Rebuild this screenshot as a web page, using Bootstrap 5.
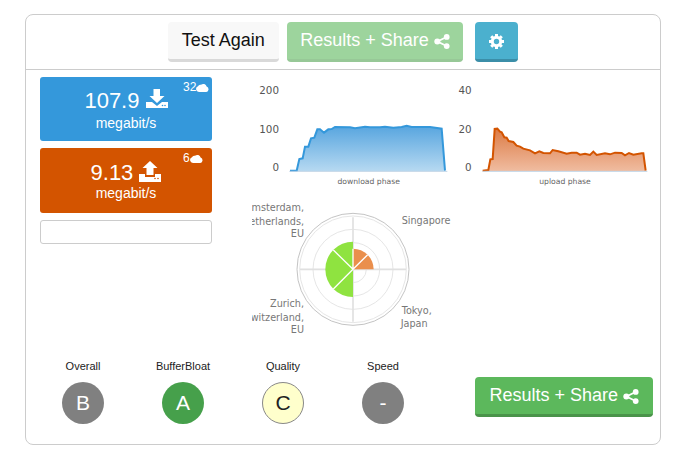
<!DOCTYPE html>
<html lang="en">
<head>
    <meta charset="UTF-8">
    <meta name="viewport" content="width=device-width, initial-scale=1.0">
    <title>Speed test results</title>
    <link href="https://cdn.jsdelivr.net/npm/bootstrap@5.3.3/dist/css/bootstrap.min.css" rel="stylesheet">
    <style>
        body {
            background: #fff;
            font-family: "Liberation Sans", Arial, sans-serif;
            color: #222;
        }
        .result-panel {
            width: 636px;
            height: 431px;
            margin: 14px 0 0 25px;
            border: 1px solid #ccc;
            border-radius: 8px;
        }
        .panel-top {
            height: 55px;
            padding-top: 7px;
            gap: 8px;
            border-bottom: 1px solid #ccc;
        }
        .btn-raised {
            height: 40px;
            padding: 0 13.5px;
            font-size: 18px;
            line-height: 35px;
            color: #fff;
            white-space: nowrap;
            border: 0;
            border-bottom: 3px solid;
            border-radius: 4px;
        }
        .btn-raised:hover { color: #fff; }
        .btn-again { padding: 0 14px; color: #111; background: #f8f8f8; border-color: #d9d9d9; }
        .btn-again:hover { color: #111; background: #f8f8f8; border-color: #d9d9d9; }
        .btn-share { background: #5cb85c; border-color: #4a934a; }
        .btn-share:hover { background: #5cb85c; border-color: #4a934a; }
        .btn-share-off { background: #9dd49d; border-color: #97c897; }
        .btn-share-off:hover { background: #9dd49d; border-color: #97c897; }
        .btn-cog { width: 43px; margin-left: 4px; padding: 0; background: #4bb0ce; border-color: #3b8ea8; }
        .btn-cog:hover { background: #4bb0ce; border-color: #3b8ea8; }
        .left-col { width: 172px; margin: 7px 38px 0 14px; }
        .speed-tile {
            height: 65px;
            margin-bottom: 7px;
            padding-top: 9px;
            color: #fff;
            text-align: center;
            border-radius: 3px;
        }
        .tile-down { height: 64px; background: #3498db; }
        .tile-up { padding-top: 10px; background: #d35400; }
        .tile-value { font-size: 22px; line-height: 29px; }
        .tile-unit { font-size: 14px; line-height: 14px; margin-top: 1px; }
        .tile-up .tile-unit { margin-top: -1px; }
        .ico-up { vertical-align: -2px; }
        .tile-servers {
            position: absolute;
            top: 3px;
            left: 143px;
            font-size: 12px;
            line-height: 14px;
        }
        .tile-blank { height: 24px; border: 1px solid #ccc; border-radius: 3px; }
        .charts-col { padding-top: 5px; }
        .chart-text { font-family: "DejaVu Sans", sans-serif; font-size: 23px; fill: #666; }
        .axis-text { font-family: "DejaVu Sans", sans-serif; font-size: 31px; fill: #555; }
        .polar-text { font-family: "DejaVu Sans", sans-serif; font-size: 29px; fill: #777; }
        .polar-box { margin-left: 2px; }
        .bottom-row { height: 87px; padding-left: 7px; padding-right: 7px; margin-top: 14px; }
        .grade-item { width: 100px; font-size: 11px; line-height: 14px; text-align: center; }
        .grade-dot {
            width: 42px;
            height: 42px;
            margin: 9px auto 0;
            color: #fff;
            font-size: 21px;
            line-height: 42px;
            border-radius: 50%;
        }
        .grade-gray { background: #808080; }
        .grade-green { background: #46a04b; }
        .grade-yellow { color: #222; background: #ffc; border: 1px solid #888; line-height: 40px; }
        .bottom-btn { margin-top: 18px; padding: 0 14px; }
    </style>
</head>
<body>
    <div class="result-panel">
        <div class="panel-top d-flex justify-content-center">
            <button type="button" class="btn btn-raised btn-again">Test Again</button>
            <button type="button" class="btn btn-raised btn-share-off">Results + Share
                <svg width="16" height="15" viewBox="0 0 16 15"><use href="#ico-share"/></svg>
            </button>
            <button type="button" class="btn btn-raised btn-cog">
                <svg width="17" height="17" viewBox="0 0 17 17" fill="none" stroke="#fff">
                    <circle cx="8.5" cy="8.5" r="4.2" stroke-width="3"/>
                    <path stroke-width="3" d="M8.5 1v3M8.5 13v3M1 8.5h3M13 8.5h3M3.2 3.2l2.1 2.1M11.7 11.7l2.1 2.1M3.2 13.8l2.1-2.1M11.7 5.3l2.1-2.1"/>
                </svg>
            </button>
        </div>

        <div class="d-flex">
            <div class="left-col">
                <div class="speed-tile tile-down position-relative">
                    <div class="tile-value">107.9
                        <svg width="22" height="19" viewBox="0 0 22 19" class="align-baseline"><use href="#ico-down"/></svg>
                    </div>
                    <div class="tile-unit">megabit/s</div>
                    <div class="tile-servers">32<svg width="13" height="9" viewBox="0 0 13 9"><use href="#ico-cloud"/></svg></div>
                </div>
                <div class="speed-tile tile-up position-relative">
                    <div class="tile-value">9.13
                        <svg width="22" height="21" viewBox="0 0 22 21" class="ico-up"><use href="#ico-up"/></svg>
                    </div>
                    <div class="tile-unit">megabit/s</div>
                    <div class="tile-servers">6<svg width="13" height="9" viewBox="0 0 13 9"><use href="#ico-cloud"/></svg></div>
                </div>
                <div class="tile-blank"></div>
            </div>

            <div class="charts-col">
                <div class="d-flex">
                    <svg width="200" height="120" viewBox="0 0 600 360">
                        <defs>
                            <linearGradient id="fillDown" x1="0" y1="0" x2="0" y2="1">
                                <stop offset="0" stop-color="#57a5df"/>
                                <stop offset="1" stop-color="#b6d9f1"/>
                            </linearGradient>
                        </defs>
                        <text class="axis-text" x="87" y="56" text-anchor="end">200</text>
                        <text class="axis-text" x="87" y="173" text-anchor="end">100</text>
                        <text class="axis-text" x="87" y="288" text-anchor="end">0</text>
                        <path fill="url(#fillDown)" d="M120 288L140 287 148 252 158 250 165 215 175 215 183 190 193 188 202 163 210 163 222 173 235 163 245 162 255 156 300 157 315 160 345 155 360 157 390 157 405 155 430 158 455 156 470 152 485 156 540 156 575 161 585 288Z"/>
                        <path fill="none" stroke="#3498db" stroke-width="6" d="M120 287H140L148 252 158 250 165 215 175 215 183 190 193 188 202 163 210 163 222 173 235 163 245 162 255 156 300 157 315 160 345 155 360 157 390 157 405 155 430 158 455 156 470 152 485 156 540 156 575 161 585 287"/>
                        <path stroke="#c0d4e6" stroke-width="3" d="M118 289H592"/>
                        <text class="chart-text" x="356" y="327" text-anchor="middle">download phase</text>
                    </svg>
                    <svg width="210" height="120" viewBox="0 0 630 360">
                        <defs>
                            <linearGradient id="fillUp" x1="0" y1="0" x2="0" y2="1">
                                <stop offset="0" stop-color="#dc7b45"/>
                                <stop offset="1" stop-color="#f0bca0"/>
                            </linearGradient>
                        </defs>
                        <text class="axis-text" x="65" y="56" text-anchor="end">40</text>
                        <text class="axis-text" x="65" y="173" text-anchor="end">20</text>
                        <text class="axis-text" x="65" y="288" text-anchor="end">0</text>
                        <path fill="url(#fillUp)" d="M98 288L115 285 121 253 128 252 134 162 142 161 150 170 155 172 163 187 170 188 176 198 190 201 200 212 210 215 220 221 240 226 255 235 268 229 280 234 300 235 308 225 325 229 350 236 365 233 380 233 390 239 405 236 420 240 430 230 440 240 465 235 480 238 495 233 515 234 525 241 537 234 550 239 575 235 580 235 587 288Z"/>
                        <path fill="none" stroke="#d35400" stroke-width="6" d="M98 287L115 285 121 253 128 252 134 162 142 161 150 170 155 172 163 187 170 188 176 198 190 201 200 212 210 215 220 221 240 226 255 235 268 229 280 234 300 235 308 225 325 229 350 236 365 233 380 233 390 239 405 236 420 240 430 230 440 240 465 235 480 238 495 233 515 234 525 241 537 234 550 239 575 235 580 235 587 287"/>
                        <path stroke="#c0d4e6" stroke-width="3" d="M98 289H592"/>
                        <text class="chart-text" x="345" y="327" text-anchor="middle">upload phase</text>
                    </svg>
                </div>
                <svg class="polar-box d-block" width="208" height="150" viewBox="6 0 624 450">
                    <g fill="none" stroke="#e6e6e6" stroke-width="3">
                        <circle cx="309" cy="223" r="40"/>
                        <circle cx="309" cy="223" r="80"/>
                        <circle cx="309" cy="223" r="120"/>
                        <circle cx="309" cy="223" r="160"/>
                    </g>
                    <circle cx="309" cy="223" r="168" fill="none" stroke="#c4c4c4" stroke-width="3"/>
                    <path stroke="#e0e0e0" stroke-width="5" d="M309 67V380M150 223H468"/>
                    <path fill="#8fe340" d="M309 223V140A83 83 0 0 0 226 223 83 83 0 0 0 309 306Z"/>
                    <path fill="#ea8f4c" d="M309 223V161A62 62 0 0 1 371 223Z"/>
                    <path stroke="#fff" stroke-width="4" fill="none" d="M309 223L250 165M309 223L250 282M309 223L353 179M309 223V161"/>
                    <g class="polar-text" text-anchor="end">
                        <text x="162" y="49">Amsterdam,</text>
                        <text x="162" y="89">Netherlands,</text>
                        <text x="162" y="127">EU</text>
                        <text x="162" y="337">Zurich,</text>
                        <text x="162" y="377">Switzerland,</text>
                        <text x="162" y="415">EU</text>
                    </g>
                    <g class="polar-text">
                        <text x="455" y="87">Singapore</text>
                        <text x="455" y="356">Tokyo,</text>
                        <text x="452" y="396">Japan</text>
                    </g>
                </svg>
            </div>
        </div>

        <div class="bottom-row d-flex">
            <div class="grade-item">Overall<div class="grade-dot grade-gray">B</div></div>
            <div class="grade-item">BufferBloat<div class="grade-dot grade-green">A</div></div>
            <div class="grade-item">Quality<div class="grade-dot grade-yellow">C</div></div>
            <div class="grade-item">Speed<div class="grade-dot grade-gray">-</div></div>
            <button type="button" class="btn btn-raised btn-share bottom-btn ms-auto">Results + Share
                <svg width="16" height="15" viewBox="0 0 16 15"><use href="#ico-share"/></svg>
            </button>
        </div>
    </div>

    <svg width="0" height="0" class="position-absolute">
        <symbol id="ico-share" viewBox="0 0 16 15">
            <path fill="none" stroke="#fff" stroke-width="1.8" d="M12.5 3L3.5 7.5 12.5 12"/>
            <circle cx="3.3" cy="7.5" r="3" fill="#fff"/>
            <circle cx="12.7" cy="2.9" r="2.9" fill="#fff"/>
            <circle cx="12.7" cy="12.1" r="2.9" fill="#fff"/>
        </symbol>
        <symbol id="ico-down" viewBox="0 0 22 19">
            <path fill="#fff" d="M7.5 0H14V7H18.5L11 14 3.500 7H7.500Z"/>
            <path fill="#fff" d="M0 13H6L11 17 16 13H22V19H0Z"/>
            <circle cx="16.500" cy="16.500" r=".8" fill="#3498db"/>
            <circle cx="19" cy="16.500" r=".8" fill="#3498db"/>
        </symbol>
        <symbol id="ico-up" viewBox="0 0 22 21">
            <path fill="#fff" d="M11 0L18.500 7H14.500V14H7.500V7H3.500Z"/>
            <path fill="#fff" d="M0 13H6V16H16V13H22V21H0Z"/>
            <circle cx="16" cy="17.500" r=".8" fill="#d35400"/>
            <circle cx="19" cy="17.500" r=".8" fill="#d35400"/>
        </symbol>
        <symbol id="ico-cloud" viewBox="0 0 13 9">
            <path fill="#fff" d="M3 9A3 3 0 0 1 2 3.200 2.500 2.500 0 0 1 5 1.800 3.400 3.400 0 0 1 10.600 3.600 2.800 2.800 0 0 1 10.300 9Z"/>
        </symbol>
    </svg>
</body>
</html>
